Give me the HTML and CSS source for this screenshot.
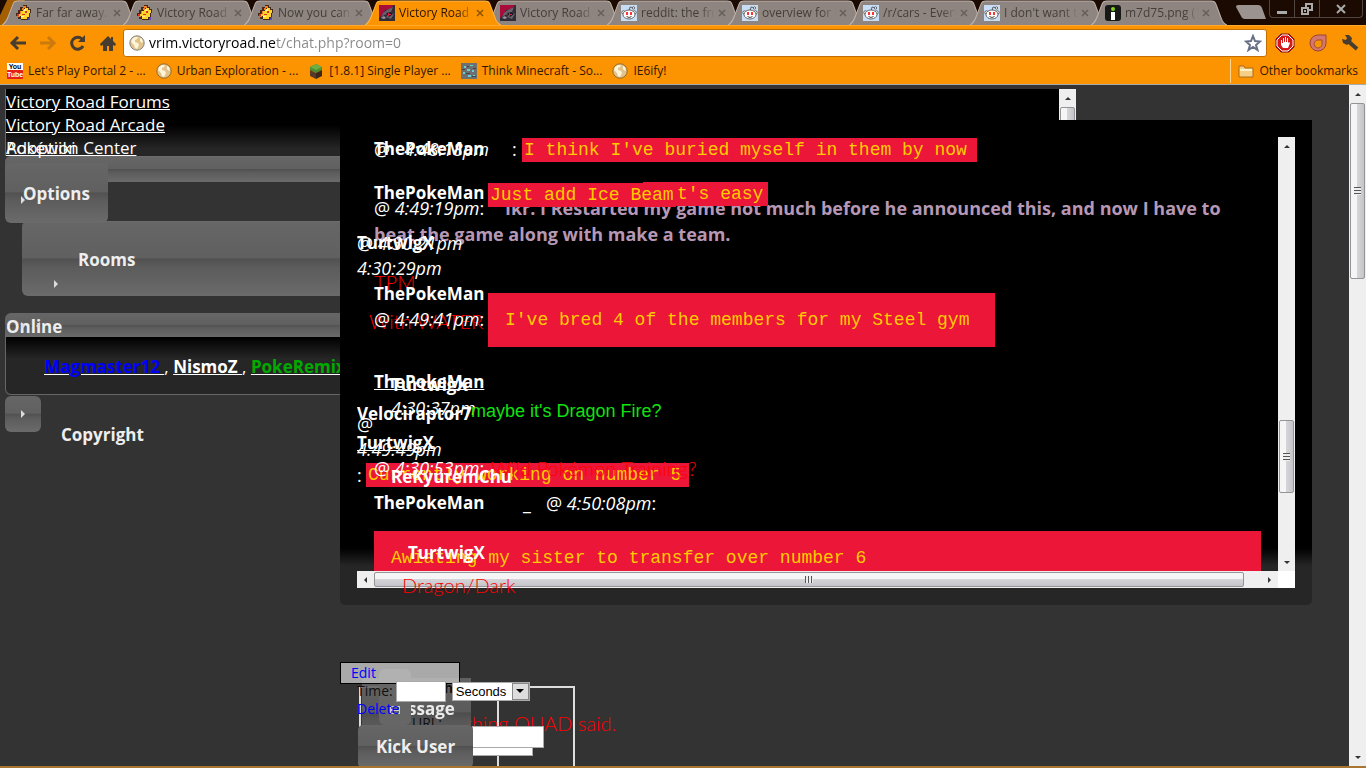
FILE: index.html
```html
<!DOCTYPE html>
<html lang="en">
<head>
<meta charset="utf-8">
<title>Victory Road Chat</title>
<link rel="stylesheet" href="styles.css">
</head>
<body>
<svg class="defs" aria-hidden="true">
  <symbol id="tabshape" viewBox="0 0 136 24" preserveAspectRatio="none"><path d="M0 24C4 22 5 19 7 14L11 4Q12 1 16 1H120Q124 1 125 4L130 17Q132 23 136 24"/></symbol>
  <symbol id="bird" viewBox="0 0 16 16"><path fill="#452817" d="M7 0h4v2h2v2h2v4h-1v5h-2v2H5v-1H2v-3H0V8h2V5h2V2h3z"/><path fill="#f87b20" d="M7 1h3v2H8v2H6v4H4v3H2V9h2V6h2V3h1z"/><path fill="#ffd52b" d="M9 3h3v2h2v3h-1v4h-2v2H5v-3H3V9h2V6h2V5h2z"/><path fill="#e52c24" d="M1 9h2v2H1zM9 6h2v2H9zM6 9h3v1H6z"/><path fill="#fff2a0" d="M8 4h2v2H8zM5 11h3v1H5z"/><path fill="#5947c0" d="M13 12h1v3h-2v-2h1z"/></symbol>
  <symbol id="zoro" viewBox="0 0 16 16"><path fill="#302c35" d="M0 0h16v16H0z"/><path fill="#a70c3a" d="M0 0h15l-4 4-5 1-2 4-4 4z"/><path fill="#68606b" d="M4 8l4-3 6-3-2 5 3 2-3 5-5-2 2-3-4 1-3 3z"/><path fill="#1d171f" d="M7 8l5-1 2 2-4 3z"/><path fill="#e91549" d="M9 8h1v1h2v1h-2v1H9z"/><path fill="#9b929b" d="M2 13l3-2 2 2-2 1z"/></symbol>
  <symbol id="reddit" viewBox="0 0 16 16"><path fill="#c7ddf5" d="M0 0h16v16H0z"/><g fill="#fff" stroke="#555" stroke-width=".9"><path fill="none" d="M8 6l1-4 4 1"/><circle cx="12.5" cy="3" r="1.2"/><circle cx="2.5" cy="7.5" r="1.7"/><circle cx="13.5" cy="7.5" r="1.7"/><ellipse cx="8" cy="9.5" rx="6" ry="4.5"/></g><path fill="#f33" d="M5 7h2v3H5zM9 7h2v3H9z"/><path d="M5.500 11.500Q8 13.500 10.500 11.500" fill="none" stroke="#444"/></symbol>
  <symbol id="minfo" viewBox="0 0 16 16"><rect width="16" height="16" rx="3" fill="#161916"/><circle cx="8" cy="4" r="2" fill="#83d51b"/><path fill="#fff" d="M6 7h4v8H6z"/></symbol>
  <symbol id="globe" viewBox="0 0 16 16"><circle cx="8" cy="8" r="7.200" class="sea"/><path class="land" d="M3 4l3-2 3 0-1 2-2 1 0 2 3 1 1 2-2 4-2-1-1-3-3-3zM11 3l2 1 1 3-1 1-2-2z"/></symbol>
  <symbol id="x" viewBox="0 0 8 8"><path d="M1 1l6 6M7 1L1 7" fill="none" stroke="currentColor" stroke-width="1.5"/></symbol>
</svg>

<header class="browser">
  <nav class="tabs" aria-label="Tabs">
    <div class="tab"><svg class="shape"><use href="#tabshape"/></svg><svg class="fav"><use href="#bird"/></svg><span class="name">Far far away. I</span><button class="close" aria-label="Close"><svg><use href="#x"/></svg></button></div>
    <div class="tab"><svg class="shape"><use href="#tabshape"/></svg><svg class="fav"><use href="#bird"/></svg><span class="name">Victory Road</span><button class="close" aria-label="Close"><svg><use href="#x"/></svg></button></div>
    <div class="tab"><svg class="shape"><use href="#tabshape"/></svg><svg class="fav"><use href="#bird"/></svg><span class="name">Now you can</span><button class="close" aria-label="Close"><svg><use href="#x"/></svg></button></div>
    <div class="tab active"><svg class="shape"><use href="#tabshape"/></svg><svg class="fav"><use href="#zoro"/></svg><span class="name">Victory Road</span><button class="close" aria-label="Close"><svg><use href="#x"/></svg></button></div>
    <div class="tab"><svg class="shape"><use href="#tabshape"/></svg><svg class="fav"><use href="#zoro"/></svg><span class="name">Victory Road</span><button class="close" aria-label="Close"><svg><use href="#x"/></svg></button></div>
    <div class="tab"><svg class="shape"><use href="#tabshape"/></svg><svg class="fav"><use href="#reddit"/></svg><span class="name">reddit: the fro</span><button class="close" aria-label="Close"><svg><use href="#x"/></svg></button></div>
    <div class="tab"><svg class="shape"><use href="#tabshape"/></svg><svg class="fav"><use href="#reddit"/></svg><span class="name">overview for l</span><button class="close" aria-label="Close"><svg><use href="#x"/></svg></button></div>
    <div class="tab"><svg class="shape"><use href="#tabshape"/></svg><svg class="fav"><use href="#reddit"/></svg><span class="name">/r/cars - Every</span><button class="close" aria-label="Close"><svg><use href="#x"/></svg></button></div>
    <div class="tab"><svg class="shape"><use href="#tabshape"/></svg><svg class="fav"><use href="#reddit"/></svg><span class="name">I don't want t</span><button class="close" aria-label="Close"><svg><use href="#x"/></svg></button></div>
    <div class="tab"><svg class="shape"><use href="#tabshape"/></svg><svg class="fav"><use href="#minfo"/></svg><span class="name">m7d75.png (1</span><button class="close" aria-label="Close"><svg><use href="#x"/></svg></button></div>
    <button class="newtab" aria-label="New tab"><svg width="30" height="14" viewBox="0 0 30 14"><path d="M2 0H22Q25 0 26 3L30 14H9Q6 14 5 11L0 2Q0 0 2 0" fill="#9b938f"/></svg></button>
    <div class="winctl">
      <button aria-label="Minimize"><svg width="12" height="12"><path fill="#aaa" d="M1 8h10v3H1z"/></svg></button>
      <button aria-label="Restore"><svg width="12" height="12"><path fill="none" stroke="#aaa" stroke-width="2" d="M5 4V1h6v6H8M1 5h6v6H1zM4 7v2"/></svg></button>
      <button class="wide" aria-label="Close window"><svg width="10" height="10"><path fill="none" stroke="#aaa" stroke-width="2" d="M1 1l8 8M9 1L1 9"/></svg></button>
    </div>
  </nav>
  <div class="toolbar">
    <button aria-label="Back"><svg width="18" height="16"><path fill="none" stroke="#463c30" stroke-width="3" d="M17 8H3M9 2L3 8l6 6"/></svg></button>
    <button aria-label="Forward"><svg width="18" height="16"><path fill="none" stroke="#cc7a0b" stroke-width="3" d="M1 8h14M9 2l6 6-6 6"/></svg></button>
    <button aria-label="Reload"><svg width="18" height="16"><path fill="none" stroke="#463c30" stroke-width="3" d="M13 4A6 6 0 1 0 14 11"/><path fill="#463c30" d="M16 0v7H9z"/></svg></button>
    <button aria-label="Home"><svg width="16" height="16"><path fill="#463c30" d="M8 1L0 9l1 2 2-1v6h4v-5h2v5h4v-6l2 1 1-2-3-3V2h-2v2z"/></svg></button>
    <div class="omnibox">
      <svg class="fav grey"><use href="#globe"/></svg>
      <input class="url" type="text" aria-label="Address" value="vrim.victoryroad.net/chat.php?room=0">
      <button aria-label="Bookmark"><svg width="18" height="18" viewBox="0 0 18 18"><path fill="#fff" stroke="#677085" stroke-width="2" d="M9 2l2 5 5 .5-4 3.500 1.500 5L9 13l-4.500 3L6 11 2 7.500 7 7z"/></svg></button>
    </div>
    <div class="exts">
    <button aria-label="Blocker"><svg width="20" height="20"><path fill="#d71919" stroke="#751111" d="M6 1h8l5 5v8l-5 5H6l-5-5V6z"/><path fill="none" stroke="#fff" d="M7 2h6l5 5v6l-5 5H7l-5-5V7z"/><path fill="#fff" d="M6 7h1v3h1V5h1v4h1V4h1v5h1V5h1v5l1-1 1 1-2 5H8l-2-3z"/></svg></button>
    <button aria-label="Extension"><svg width="18" height="18"><path fill="#d4786d" stroke="#984436" d="M9 1h8v8a8 8 0 1 1-8-8z"/><path fill="#f49407" stroke="#a64a2e" d="M9 6h4v3a4 4 0 1 1-4-3z"/></svg></button>
    <button aria-label="Settings"><svg width="18" height="18"><path fill="none" stroke="#463c30" stroke-width="4" d="M7 7l9 8"/><path fill="#463c30" d="M1 5l4 1 1-2-2-3 4 0 3 3-1 4-4 3-4-2z"/></svg></button>
    </div>
  </div>
  <div class="bookmarks">
    <a href="#"><svg class="fav"><path fill="#fff" d="M0 0h16v7H0z"/><rect y="7" width="16" height="9" rx="1" fill="#e51e16"/><text x="8" y="6" class="yt1">You</text><text x="8" y="14" class="yt2">Tube</text></svg>Let's Play Portal 2 - ...</a>
    <a href="#"><svg class="fav tan"><use href="#globe"/></svg>Urban Exploration - ...</a>
    <a href="#"><svg class="fav" viewBox="0 0 16 16"><path fill="#4f8d2f" d="M8 1l6 3v3l-6 3-6-3V4z"/><path fill="#593a28" d="M2 7l6 3v6l-6-3z"/><path fill="#3d271c" d="M14 7l-6 3v6l6-3z"/><path fill="#6fae42" d="M8 1l6 3-6 3-6-3z"/></svg>[1.8.1] Single Player ...</a>
    <a href="#"><svg class="fav"><path fill="#6d6f70" d="M0 0h16v16H0z"/><path fill="#6cd0d3" d="M3 3h2v2H3zM9 2h3v1H9zM6 6h3v2H6zM11 7h2v2h-2zM2 9h2v2H2zM7 12h3v2H7zM12 12h2v1h-2z"/><path fill="#3f4548" d="M1 6h3v1H1zM12 5h3v1h-3zM5 10h4v1H5zM11 13h4v1h-4zM6 3h2v1H6z"/></svg>Think Minecraft - So...</a>
    <a href="#"><svg class="fav tan"><use href="#globe"/></svg>IE6ify!</a>
    <a href="#" class="other"><svg class="fav"><path fill="#f5cf86" stroke="#ad6a19" d="M1 3h5l1 2h8v9H1z"/><path fill="#fff1c6" d="M2 6h12v2H2z"/></svg>Other bookmarks</a>
  </div>
</header>

<main class="viewport">
  <div class="page">
    <section class="side">
      <div class="linksbox">
        <ul class="links">
          <li><a href="#">Victory Road Forums</a></li>
          <li><a href="#">Victory Road Arcade</a></li>
          <li><a href="#">Adoption Center</a><a href="#" class="dup">Pokéwiki</a></li>
        </ul>
        <div class="vbar"><i class="arr up"></i><i class="thumb"></i></div>
      </div>
      <div class="stripe gloss"></div>
      <button class="options gloss"><i class="tri"></i>Options</button>
      <div class="rooms gloss"><span>Rooms</span><i class="tri"></i></div>
      <h2 class="online gloss">Online<i class="tri t1"></i><i class="tri t2"></i></h2>
      <p class="users"><a href="#" class="blue">Magmaster12 </a>, <a href="#">NismoZ </a>, <a href="#" class="green">PokeRemix</a></p>
      <div class="copy"><button class="toggle gloss" aria-label="Expand"><i class="tri"></i></button><b>Copyright</b></div>
    </section>

    <section class="chat">
      <div class="frame">
        <div class="log">
          <span class="m a1">@ &nbsp; <em>4:48:18pm</em></span><b class="m a2">ThePokeMan</b><span class="m a3">:</span><span class="m mono a4">I think I've buried myself in them by now</span>
          <p class="m comic b1">Ikr. I Restarted my game not much before he announced this, and now I have to</p><p class="m comic b6">beat the game along with make a team.</p>
          <b class="m b2">ThePokeMan</b><span class="m mono b3">t's easy</span><span class="m mono b4">Just add Ice Beam</span><span class="m b5">@ <em>4:49:19pm</em>:</span>
          <span class="m c1">@ <em>4:30:21pm</em></span><b class="m c2">TurtwigX</b><em class="m c3">4:30:29pm</em><span class="m thin c4">TPM</span>
          <b class="m d1">ThePokeMan</b><span class="m thin d2">With WATER m</span><span class="m d3">@ <em>4:49:41pm</em>:</span><span class="m mono d4">I've bred 4 of the members for my Steel gym</span>
          <a href="#" class="m e1">ThePokeMan</a><b class="m e2">TurtwigX</b><em class="m e3">4:30:37pm</em><span class="m arial e4">maybe it's Dragon Fire?</span><b class="m e5">Velociraptor7</b><span class="m e6">@</span><em class="m e7">4:49:49pm</em><a href="#" class="m e8">TurtwigX</a>
          <span class="m f1">:</span><span class="m mono f2">Currently working on number 5</span><span class="m f3">@ <em>4:30:53pm</em>:</span><span class="m thin f4">Wild Pokémon Training?</span><b class="m f5">ReKyuremChu</b>
          <b class="m g1">ThePokeMan</b><span class="m g2">_</span><span class="m g3">@ <em>4:50:08pm</em>:</span>
          <span class="m mono g4">Awiating my sister to transfer over number 6</span><b class="m g5">TurtwigX</b>
        </div>
        <div class="vbar"><i class="arr up"></i><i class="thumb"><i class="grip"></i></i><i class="arr down"></i></div>
        <div class="hbar"><i class="arr left"></i><i class="thumb"><i class="grip"></i></i><i class="arr right"></i></div>
        <span class="m thin g6">Dragon/Dark</span>
      </div>
    </section>

    <section class="tools">
      <div class="cell"></div><div class="cell two"></div>
      <span class="thin quad">thing QUAD said.</span>
      <div class="msgbtn gloss"><b>Message</b></div>
      <div class="knob"></div>
      <label class="urllab" for="u">URL:</label>
      <input class="u2" type="text" aria-label="Name"><input class="u1" id="u" type="text">
      <button class="kick gloss">Kick User</button>
      <span class="under">h</span>
      <div class="menu"><a href="#">Edit</a></div>
      <div class="time"><label for="t">Time:</label><input id="t" type="text"><select aria-label="Unit"><option>Seconds</option></select><i class="drop"></i></div>
      <i class="minus"></i><a href="#" class="del">Delete</a>
    </section>
  </div>
  <div class="vbar main"><i class="arr up"></i><i class="thumb"><i class="grip"></i></i><i class="arr down"></i></div>
</main>
</body>
</html>
```

FILE: styles.css
```css
* { box-sizing: border-box; }
body { margin: 0; height: 100vh; display: flex; flex-direction: column; overflow: hidden; background: #333; color: #fff; font: 17px/24px "Open Sans", "Noto Sans", sans-serif; }
button { margin: 0; padding: 0; border: 0; background: none; color: inherit; font: inherit; display: flex; align-items: center; justify-content: center; }
.defs { position: absolute; width: 0; height: 0; }
a { color: #fff; }

/* browser frame */
.browser { flex: none; background: #fb9400; color: #321600; font-size: 12px; border-bottom: 1px solid #a9a9ad; }
.tabs { display: flex; height: 25px; padding-left: 2px; background: linear-gradient(115deg, #1a0a02 6px, #a35f02 7px, #a35f02 22px, #1a0a02 23px); }
.tab { position: relative; flex: none; display: flex; align-items: center; width: 136px; height: 25px; margin-right: -15px; padding: 1px 14px 0 14px; color: #443d3a; }
.shape { position: absolute; left: 0; top: 0; width: 136px; height: 25px; fill: #8f8580; stroke: #c0b3aa; }
.active { z-index: 2; color: #2c1300; }
.active .shape { fill: #fb9400; stroke: #ffb64c; }
.fav { position: relative; flex: none; width: 16px; height: 16px; }
.name { position: relative; flex: 1; height: 24px; margin-left: 4px; overflow: hidden; white-space: nowrap; mask-image: linear-gradient(90deg, #000 80%, transparent); }
.close { position: relative; width: 14px; color: #675e5a; }
.close svg { width: 8px; height: 8px; }
.active .close { color: #8e5200; }
.newtab { margin: 5px 0 0 24px; height: 14px; }
.winctl { display: flex; height: 18px; margin-left: auto; margin-right: 3px; border: 1px solid #514641; border-top: 0; border-radius: 0 0 4px 4px; }
.winctl button { width: 25px; border-right: 1px solid #514641; }
.winctl .wide { width: 42px; border: 0; }
.toolbar { display: flex; align-items: center; height: 34px; padding: 0 4px 0 3px; border-top: 1px solid #ffa92f; }
.toolbar > button { width: 30px; }
.omnibox { flex: 1; display: flex; align-items: center; height: 28px; padding: 0 4px 0 5px; background: #fff; border: 1px solid #c36e00; border-radius: 3px; }
.url { flex: 1; min-width: 0; border: 0; outline: 0; padding: 0 0 0 4px; font: 14px/24px "Open Sans", sans-serif; background: linear-gradient(90deg, #000 131px, #888 131px); background-clip: text; -webkit-background-clip: text; -webkit-text-fill-color: transparent; }
.exts { display: flex; gap: 14px; padding: 0 3px 0 8px; }
.grey { color: #858585; }
.tan { color: #9b6b29; }
.sea { fill: #e0c48c; stroke: currentColor; }
.grey .sea { fill: #a5a5a5; }
.land { fill: #fff4d8; }
.grey .land { fill: #eee; }
.bookmarks { display: flex; align-items: center; gap: 10px; height: 25px; padding: 0 8px 2px 7px; }
.bookmarks a { display: flex; align-items: center; gap: 5px; color: #321600; text-decoration: none; white-space: nowrap; }
.bookmarks .other { margin-left: auto; padding-left: 7px; border-left: 1px solid #ffd596; }
.yt1, .yt2 { font: bold 7px "Liberation Sans", sans-serif; text-anchor: middle; }
.yt2 { fill: #fff; }

/* scroll bars */
.viewport { flex: 1; display: flex; min-height: 0; border-bottom: 2px solid #a87532; }
.vbar, .hbar { display: flex; align-items: center; background: #efefef; }
.vbar { flex: none; flex-direction: column; width: 17px; padding: 0 1px; }
.arr { flex: none; width: 17px; height: 18px; display: grid; place-items: center; }
.arr::before { content: ""; border: 3px solid transparent; }
.up::before { border-top: 0; border-bottom-color: #333; }
.down::before { border-bottom: 0; border-top-color: #333; }
.left::before { border-left: 0; border-right-color: #333; }
.right::before { border-right: 0; border-left-color: #333; }
.down, .right { margin-top: auto; }
.thumb { display: grid; place-items: center; width: 15px; border: 1px solid #939398; border-radius: 2px; background: linear-gradient(90deg, #f5f5f5 45%, #d5d5d9 50%, #c4c4ca); }
.grip { width: 7px; height: 8px; background: repeating-linear-gradient(#555 0 1px, #eee 1px 3px); }
.main .thumb { height: 176px; }

/* page */
.page { position: relative; flex: 1; min-width: 0; overflow: hidden; }
.gloss { background: linear-gradient(#666, #606060 48%, #515151 50%, #5c5c5c 62%, #6b6b6b); border: 0 solid #6c6c6c; }
.tri { display: block; border: 4px solid transparent; border-left-color: #ddd; border-right: 0; }
.side { padding: 4px 273px 0 5px; }
.linksbox { display: flex; height: 67px; }
.links { flex: 1; margin: 0; padding: 1px 0 0; list-style: none; background: linear-gradient(#000 36px, #262626 60px); border-left: 1px solid #666; line-height: 23px; }
.links li { position: relative; }
.dup { position: absolute; left: 0; top: 0; }
.linksbox .thumb { flex: 1; }
.stripe { height: 26px; border-top-width: 1px; border-radius: 6px 0 0; }
.options { position: relative; width: 103px; height: 60px; margin-top: -19px; padding-top: 2px; border-radius: 6px 0 6px 6px; font-weight: bold; color: #eee; }
.options .tri { position: absolute; left: 16px; top: 33px; }
.rooms { display: flex; flex-direction: column; height: 75px; margin: -2px 0 17px 17px; padding: 26px 0 0 56px; border-top-width: 1px; border-radius: 6px; font-weight: bold; color: #eee; }
.rooms .tri { width: 4px; margin: 8px 0 0 -24px; }
.online { position: relative; height: 24px; margin: 0; padding: 2px 1px 0; border-radius: 6px 6px 0 0; font-size: 17px; line-height: 24px; color: #eee; }
.t1, .t2 { position: absolute; top: 9px; left: 16px; }
.t2 { left: 31px; border-left: 0; border-right: 4px solid #ddd; }
.users { height: 58px; margin: 0 0 1px; padding: 18px 38px; border: 1px solid #666; border-top: 0; border-radius: 0 0 6px 6px; background: linear-gradient(#000, #262626 22px); white-space: nowrap; }
.users a { font-weight: bold; }
.users .blue { color: #00f; text-decoration-color: #fff; }
.users .green { color: #0a0; text-decoration-color: #fff; }
.copy { display: flex; gap: 20px; color: #eee; }
.copy b { padding-top: 27px; }
.toggle { width: 36px; height: 36px; border-radius: 6px; }

/* chat window over the page */
.chat { position: absolute; left: 340px; right: 37px; top: 35px; padding: 17px; border-radius: 0 0 5px 5px; background: linear-gradient(#000 428px, #262626 446px); }
.frame { position: relative; display: grid; grid-template-columns: 1fr 17px; grid-template-rows: 434px 17px; background: #fff; }
.log { position: relative; overflow: hidden; background: linear-gradient(#000 411px, #262626 429px); }
.chat .vbar .thumb { height: 73px; margin-top: 265px; }
.chat .hbar .thumb { flex: 1; height: 15px; margin-right: 17px; background: linear-gradient(#f5f5f5 45%, #d5d5d9 50%, #c4c4ca); }
.chat .hbar .grip { width: 8px; height: 7px; background: repeating-linear-gradient(90deg, #555 0 1px, #eee 1px 3px); }
.hbar .right { margin-top: 0; }
.m { position: absolute; margin: 0; font-size: 18px; white-space: nowrap; }
a.m, b.m { font-size: 17px; font-weight: bold; }
.mono { padding: 0 2px; background: #eb1638; color: #fc0; font: 18px/24px "Liberation Mono", monospace; }
.comic { color: #b698b5; font: bold 18px/26px "Comic Sans MS", "Open Sans", sans-serif; }
.thin { color: #f00; font: 300 20px/24px "Century Gothic", Lato, sans-serif; }
.arial { color: #11e211; font: 18px/24px "Liberation Sans", Arial, sans-serif; }
.a1 { left: 17px; top: 0; }
.a2 { left: 17px; top: 0; }
.a3 { left: 155px; top: 0; }
.a4 { left: 165px; top: 1px; width: 455px; }
.b1 { left: 148px; top: 58px; }
.b6 { left: 17px; top: 84px; }
.b2 { left: 17px; top: 44px; }
.b3 { left: 286px; top: 45px; width: 125px; padding-left: 34px; }
.b4 { left: 131px; top: 46px; width: 188px; }
.b5 { left: 17px; top: 59px; }
.c1, .c2 { left: 0; top: 94px; }
.c3 { left: 0; top: 119px; }
.c4 { left: 17px; top: 133px; }
.d1 { left: 17px; top: 145px; }
.d2 { left: 12px; top: 172px; }
.d3 { left: 17px; top: 170px; }
.d4 { left: 131px; top: 156px; width: 507px; padding: 15px 17px; }
.e1 { left: 17px; top: 233px; }
.e2 { left: 34px; top: 236px; }
.e3 { left: 34px; top: 259px; }
.e4 { left: 114px; top: 262px; }
.e5 { left: 0; top: 265px; }
.e6 { left: 0; top: 275px; }
.e7 { left: 0; top: 300px; }
.e8 { left: 0; top: 294px; }
.f1 { left: 0; top: 326px; }
.f2 { left: 9px; top: 326px; width: 323px; }
.f3 { left: 17px; top: 319px; }
.f4 { left: 134px; top: 319px; }
.f5 { left: 34px; top: 328px; }
.g1 { left: 17px; top: 354px; }
.g2 { left: 166px; top: 354px; }
.g3 { left: 189px; top: 354px; }
.g4 { left: 17px; right: 17px; top: 394px; height: 54px; padding: 15px 17px; }
.g5 { left: 51px; top: 404px; }
.g6 { left: 45px; top: 436px; }

/* moderation popups, stacked over one another */
.tools { position: absolute; left: 340px; top: 577px; width: 300px; height: 120px; font-size: 14px; line-height: 20px; }
.tools > * { position: absolute; }
.cell { left: 19px; top: 24px; width: 140px; height: 120px; border: 2px solid #ddd; }
.two { left: 157px; width: 78px; border-left-width: 1px; }
.quad { left: 125px; top: 49px; white-space: nowrap; }
.msgbtn { left: 22px; top: 16px; width: 109px; height: 70px; padding: 21px 0 0 20px; opacity: .9; font-size: 17px; }
.knob { left: 39px; top: 7px; width: 32px; height: 56px; border-radius: 6px; background: #666; }
.urllab { left: 72px; top: 51px; color: #111; }
.u1 { left: 132px; top: 64px; width: 72px; height: 22px; }
.u2 { left: 132px; top: 80px; width: 61px; height: 14px; }
.tools input { border: 1px solid #aaa; background: #fff; padding: 0 2px; }
.kick { left: 18px; top: 63px; width: 115px; height: 43px; border-radius: 5px; font-weight: bold; font-size: 17px; color: #eee; }
.under { left: 104px; top: 16px; color: #111; font-weight: bold; }
.menu { left: 0; top: 0; width: 120px; height: 22px; padding-left: 10px; background: rgba(190, 190, 190, .85); border: 1px solid #000; }
.menu a, .del { color: #00f; text-decoration: none; }
.time { left: 17px; top: 19px; display: flex; align-items: center; height: 20px; color: #111; }
.time input { width: 50px; height: 21px; margin: 0 6px 0 3px; }
.time select { width: 78px; height: 19px; padding: 0 3px; appearance: none; border: 1px solid #aaa; border-radius: 0; background: #fff; color: #000; font: 13px "Liberation Sans", sans-serif; }
.drop { display: grid; place-items: center; width: 17px; height: 17px; margin-left: -18px; border: 1px solid #888; background: #ddd; }
.drop::before { content: ""; border: 4px solid transparent; border-top-color: #000; border-bottom: 0; }
.del { left: 17px; top: 37px; }
.minus { left: 50px; top: 44px; width: 10px; height: 8px; border: 1px solid #ccc; background: linear-gradient(transparent 2px, #ccc 2px 4px, transparent 4px); }
```
